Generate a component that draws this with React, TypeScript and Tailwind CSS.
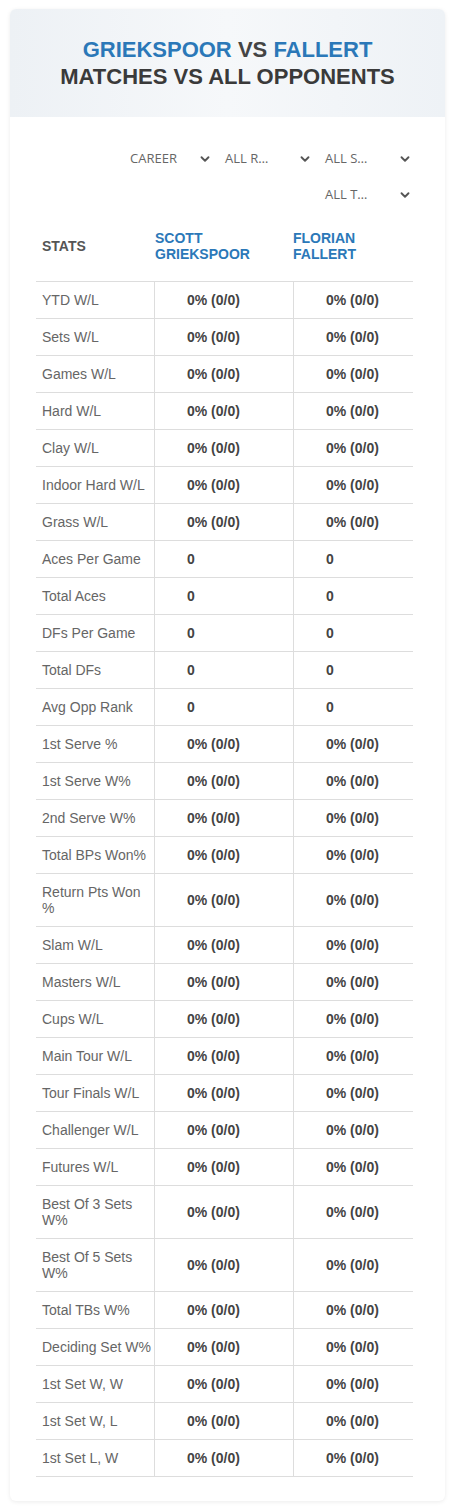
import React from 'react';
import { ChevronDown } from 'lucide-react';

const PCT = '0% (0/0)';

const rows: { label: string; a: string; b: string }[] = [
  { label: 'YTD W/L', a: PCT, b: PCT },
  { label: 'Sets W/L', a: PCT, b: PCT },
  { label: 'Games W/L', a: PCT, b: PCT },
  { label: 'Hard W/L', a: PCT, b: PCT },
  { label: 'Clay W/L', a: PCT, b: PCT },
  { label: 'Indoor Hard W/L', a: PCT, b: PCT },
  { label: 'Grass W/L', a: PCT, b: PCT },
  { label: 'Aces Per Game', a: '0', b: '0' },
  { label: 'Total Aces', a: '0', b: '0' },
  { label: 'DFs Per Game', a: '0', b: '0' },
  { label: 'Total DFs', a: '0', b: '0' },
  { label: 'Avg Opp Rank', a: '0', b: '0' },
  { label: '1st Serve %', a: PCT, b: PCT },
  { label: '1st Serve W%', a: PCT, b: PCT },
  { label: '2nd Serve W%', a: PCT, b: PCT },
  { label: 'Total BPs Won%', a: PCT, b: PCT },
  { label: 'Return Pts Won %', a: PCT, b: PCT },
  { label: 'Slam W/L', a: PCT, b: PCT },
  { label: 'Masters W/L', a: PCT, b: PCT },
  { label: 'Cups W/L', a: PCT, b: PCT },
  { label: 'Main Tour W/L', a: PCT, b: PCT },
  { label: 'Tour Finals W/L', a: PCT, b: PCT },
  { label: 'Challenger W/L', a: PCT, b: PCT },
  { label: 'Futures W/L', a: PCT, b: PCT },
  { label: 'Best Of 3 Sets W%', a: PCT, b: PCT },
  { label: 'Best Of 5 Sets W%', a: PCT, b: PCT },
  { label: 'Total TBs W%', a: PCT, b: PCT },
  { label: 'Deciding Set W%', a: PCT, b: PCT },
  { label: '1st Set W, W', a: PCT, b: PCT },
  { label: '1st Set W, L', a: PCT, b: PCT },
  { label: '1st Set L, W', a: PCT, b: PCT },
];

const filters = [
  { label: 'CAREER', w: 'w-[90px]' },
  { label: 'ALL R…', w: 'w-[95px]' },
  { label: 'ALL S…', w: 'w-[95px]' },
  { label: 'ALL T…', w: 'w-[95px]' },
];

export default function App() {
  return (
    <div className="min-h-screen bg-white px-[10px] pt-[9px] [font-family:'Liberation_Sans',Arial,sans-serif]">
      <div className="rounded-md bg-white pb-6 shadow-[0_1px_4px_rgba(0,0,0,0.08)]">
        <div className="flex h-[108px] flex-col items-center justify-center rounded-t-md bg-gradient-to-r from-[#edf1f5] via-[#f6f8fa] to-[#eef2f6] text-[22px] font-bold leading-[27px]">
          <h1>
            <span className="text-[#2b78b8]">GRIEKSPOOR</span>{' '}
            <span className="text-[#444]">VS</span>{' '}
            <span className="text-[#2b78b8]">FALLERT</span>
          </h1>
          <h2 className="text-[#3a3a3a]">MATCHES VS ALL OPPONENTS</h2>
        </div>

        <div className="pl-[26px] pr-[30px]">
          <div className="flex flex-wrap justify-end gap-x-[5px] gap-y-[6px] pt-[27px]">
            {filters.map((f) => (
              <div
                key={f.label}
                className={`${f.w} flex h-[30px] items-center justify-between pl-[5px] pr-[3px] [font-family:'Open_Sans',sans-serif] text-[13px] text-[#666]`}
              >
                <span>{f.label}</span>
                <ChevronDown size={14} strokeWidth={3.2} className="text-[#555]" />
              </div>
            ))}
          </div>

          <div className="w-[377px]">
            <div className="grid h-[71px] grid-cols-[118px_139px_120px] items-center text-[14px] font-bold leading-4">
              <div className="pl-[6px] text-[#555]">STATS</div>
              <div className="pl-px text-[#2b78b8]">
                SCOTT
                <br />
                GRIEKSPOOR
              </div>
              <div className="text-[#2b78b8]">
                FLORIAN
                <br />
                FALLERT
              </div>
            </div>
            {rows.map((r, i) => (
              <div
                key={r.label}
                className={`grid grid-cols-[118px_139px_120px] border-t border-[#ddd] text-[14px] leading-4 ${
                  i === rows.length - 1 ? 'border-b' : ''
                }`}
              >
                <div className="py-[10px] pl-[6px] text-[#666]">{r.label}</div>
                <div className="flex items-center border-l border-[#ddd] pl-[32px] font-bold text-[#444]">
                  {r.a}
                </div>
                <div className="flex items-center border-l border-[#ddd] pl-[32px] font-bold text-[#444]">
                  {r.b}
                </div>
              </div>
            ))}
          </div>
        </div>
      </div>
    </div>
  );
}
